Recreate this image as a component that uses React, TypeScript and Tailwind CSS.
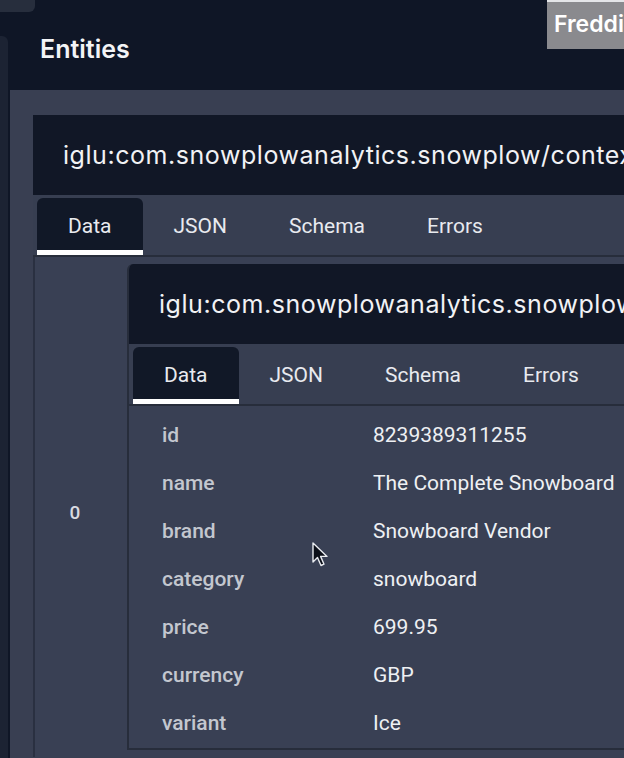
const tabs = ["Data", "JSON", "Schema", "Errors"];

const fields: [string, string][] = [
  ["id", "8239389311255"],
  ["name", "The Complete Snowboard"],
  ["brand", "Snowboard Vendor"],
  ["category", "snowboard"],
  ["price", "699.95"],
  ["currency", "GBP"],
  ["variant", "Ice"],
];

function TabBar() {
  return (
    <div className="flex h-[62px] items-end border-b-2 border-[#272d3b] bg-[#373e51] pl-1 font-['Roboto',sans-serif] text-[21px] text-[#e8eaef]">
      {tabs.map((t, i) => (
        <div
          key={t}
          className={
            i === 0
              ? "flex h-[57px] items-center rounded-t-md border-b-[5px] border-white bg-[#111827] px-[31px] pt-[5px]"
              : "flex h-[57px] items-center border-b-[5px] border-transparent px-[31px] pt-[5px]"
          }
        >
          {t}
        </div>
      ))}
    </div>
  );
}

function CardHeader({ title }: { title: string }) {
  return (
    <div className="flex h-[80px] items-center whitespace-nowrap bg-[#111726] px-[30px] pt-[2px] font-['Inter',sans-serif] text-[25px] tracking-[0.55px] text-[#f1f2f5]">
      {title}
    </div>
  );
}

function Cursor() {
  return (
    <svg
      className="absolute left-[312px] top-[542px]"
      width="18"
      height="26"
      viewBox="0 0 18 26"
    >
      <path
        d="M1 1 L1 20 L5.5 15.5 L9 23.5 L12 22.2 L8.6 14.4 L15 14.4 Z"
        fill="#0b0f18"
        stroke="#e9ebf0"
        strokeWidth="1.4"
        strokeLinejoin="round"
      />
    </svg>
  );
}

export default function App() {
  return (
    <div className="relative flex h-[758px] w-[624px] overflow-hidden bg-[#0f1626]">
      {/* corner of the neighbouring panel */}
      <div className="absolute left-0 top-0 h-[12px] w-[35px] rounded-br-md bg-[#272e3d]" />

      <div className="mr-[2px] mt-[36px] w-[8px] shrink-0 rounded-tr-md bg-[#1c2333]" />

      <div className="flex min-w-0 flex-1 flex-col">
        <div className="flex h-[90px] shrink-0 items-start pl-[30px] pt-[31px] font-['Inter',sans-serif] text-[25px] font-semibold text-[#f3f4f6]">
          Entities
        </div>

        <div className="flex-1 bg-[#393f52] pl-[23px] pt-[24px]">
          <div className="w-[800px]">
            <div className="pt-[1px]">
              <CardHeader title="iglu:com.snowplowanalytics.snowplow/contexts/jsonschema" />
            </div>
            <TabBar />

            <div className="flex border-l-2 border-[#2a3041] bg-[#394054]">
              <div className="flex w-[92px] shrink-0 items-center justify-center pr-[12px] pt-[12px] font-['Roboto',sans-serif] text-[19px] font-medium text-[#d9dbe1]">
                0
              </div>

              <div className="flex-1 py-[7px]">
                <div className="overflow-hidden rounded-tl-md border-b-2 border-l-2 border-[#272d3b]">
                  <CardHeader title="iglu:com.snowplowanalytics.snowplow/product/jsonschema" />
                  <TabBar />
                  <div className="grid grid-cols-[211px_1fr] bg-[#394054] pb-[1px] pl-[33px] pt-[5px] font-['Roboto',sans-serif] text-[21px]">
                    {fields.map(([k, v]) => (
                      <div key={k} className="contents">
                        <div className="flex h-[48px] items-center pt-[2px] font-medium text-[#c3c7cf]">
                          {k}
                        </div>
                        <div className="flex h-[48px] items-center pt-[2px] text-[#eef0f3]">
                          {v}
                        </div>
                      </div>
                    ))}
                  </div>
                </div>
              </div>
            </div>
          </div>
        </div>
      </div>

      {/* user name tag */}
      <div className="absolute right-0 top-0 h-[49px] w-[77px] overflow-hidden border-t-2 border-[#e4e5e8] bg-[#8a8a8e] pl-[7px] pt-[5px] font-['Inter',sans-serif] text-[23px] font-semibold whitespace-nowrap text-white">
        Freddie
      </div>

      <Cursor />
    </div>
  );
}
